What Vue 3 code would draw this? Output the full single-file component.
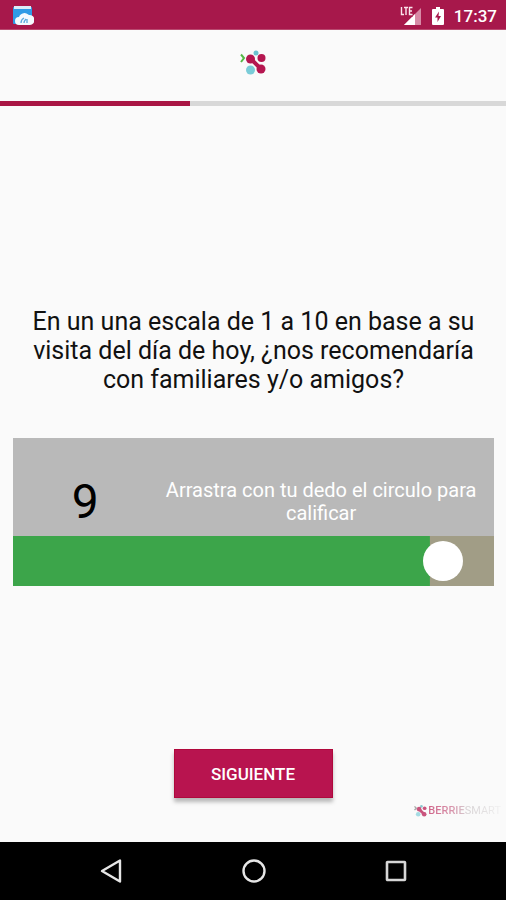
<script setup>
import { computed, ref } from 'vue'

const rating = ref(9.3)
const score = computed(() => Math.floor(rating.value))
const fillStyle = computed(() => ({ '--score': score.value / 10 }))
const progress = 37.6
</script>

<template>
  <div class="screen">
    <header class="status">
      <svg class="app-icon" width="22" height="20" viewBox="0 0 22 20" aria-hidden="true">
        <rect x="1" y="1" width="19" height="17" rx="1" fill="#2f9be6" />
        <rect x="2" y="0" width="17" height="3" fill="#dcecf8" />
        <path d="M7 19a4 4 0 0 1 0-8 6 6 0 0 1 10-2 4.800 4.800 0 0 1 1 10z" fill="#f4fafe" />
        <path d="M9 17c0-3 1-4 3-5M12 17c0-2 1-3 2-4M15 17v-4" stroke="#5aa9de" stroke-width="1.300" fill="none" />
      </svg>
      <div class="status-right">
        <svg width="22" height="20" viewBox="0 0 22 20" aria-label="LTE">
          <path d="M21 2v17H4z" fill="#d78aa6" />
          <path d="M15 8v11H4z" fill="#fff" />
          <path d="M1 1v8h3M4 1.500h4M6 1.500V9M13 1.500H9V9h4M9 5h3" stroke="#a7184b" stroke-width="3" fill="none" />
          <path d="M1.500 1v7.500h2.500M4 1.500h4M6 1.500V9M12.500 1.500H9.500v7h3M9.500 5H12" stroke="#fbe4ec" stroke-width="1.400" fill="none" />
        </svg>
        <svg class="battery" width="12" height="18" viewBox="0 0 12 18" aria-hidden="true">
          <path d="M4 0h4v2h3q1 0 1 1v14q0 1-1 1H1q-1 0-1-1V3q0-1 1-1h3z" fill="#fff" />
          <path d="M7 4.500 3 10.500h2.500v4.500L9 9H6.500z" fill="#a7184b" />
        </svg>
        <time class="clock">17:37</time>
      </div>
    </header>

    <div class="brand">
      <svg width="26" height="26" viewBox="1 0 26 26" role="img" aria-label="Berrie">
        <path d="M2 4.500l3 3.500-3 4" stroke="#55b847" stroke-width="2" fill="none" />
        <circle cx="17" cy="3" r="2.500" fill="#6bc3d0" />
        <circle cx="11.500" cy="20" r="4.500" fill="#7accd8" />
        <path d="M12 9l10 10" stroke="#b51650" stroke-width="4" />
        <circle cx="11.500" cy="9" r="4.500" fill="#b51650" />
        <circle cx="22.500" cy="8" r="4" fill="#b51650" />
        <circle cx="22" cy="19" r="4.500" fill="#b51650" />
      </svg>
    </div>
    <div class="progress" role="progressbar" :aria-valuenow="progress" aria-valuemin="0" aria-valuemax="100">
      <div class="progress-fill" :style="{ width: progress + '%' }"></div>
    </div>

    <main class="content">
      <label class="question" for="rating">En un una escala de 1 a 10 en base a su visita del día de hoy, ¿nos recomendaría con familiares y/o amigos?</label>
      <section class="card">
        <div class="card-top">
          <output class="score" for="rating">{{ score }}</output>
          <p class="hint">Arrastra con tu dedo el circulo para calificar</p>
        </div>
        <input id="rating" v-model.number="rating" class="slider" :style="fillStyle" type="range" min="0" max="10" step="0.01" />
      </section>
    </main>

    <footer class="footer">
      <button class="next" type="button">SIGUIENTE</button>
      <div class="watermark">
        <svg width="13" height="12" viewBox="0 0 28 26" aria-hidden="true">
          <path d="M1 3l4 4-4 4" stroke="#a8a8a8" stroke-width="3" fill="none" />
          <circle cx="16" cy="3" r="3" fill="#8fc8d0" />
          <circle cx="9" cy="20" r="5" fill="#a5dbe3" />
          <path d="M11 9l11 11" stroke="#c9547d" stroke-width="6" />
          <circle cx="11" cy="9" r="5" fill="#c9547d" />
          <circle cx="23" cy="7" r="4" fill="#c9547d" />
          <circle cx="22" cy="20" r="5" fill="#c9547d" />
        </svg>
        <span class="wordmark"><b>BERRIE</b>SMART</span>
      </div>
    </footer>

    <nav class="nav">
      <button type="button" aria-label="Atrás">
        <svg width="24" height="26" viewBox="0 0 24 26"><path d="M20 2.500v21L2 13z" fill="none" stroke="#e6e6e6" stroke-width="2.400" stroke-linejoin="round" /></svg>
      </button>
      <button type="button" aria-label="Inicio">
        <svg width="26" height="26" viewBox="0 0 26 26"><circle cx="13" cy="13" r="10.500" fill="none" stroke="#e6e6e6" stroke-width="2.400" /></svg>
      </button>
      <button type="button" aria-label="Recientes">
        <svg width="24" height="26" viewBox="0 0 24 26"><rect x="3" y="4" width="18" height="18" rx="0.500" fill="none" stroke="#d6d6d6" stroke-width="2.600" /></svg>
      </button>
    </nav>
  </div>
</template>

<style>
body {
  margin: 0;
  background: #fafafa;
}
</style>

<style scoped>
.screen {
  display: flex;
  flex-direction: column;
  min-height: 100vh;
  background: #fafafa;
  color: #111;
  font-family: Roboto, "Liberation Sans", sans-serif;
}
.status {
  display: flex;
  align-items: center;
  justify-content: space-between;
  box-sizing: border-box;
  height: 30px;
  padding: 2px 9px 0 12px;
  background: #a7184b;
  border-bottom: 1px solid #b94a70;
}
.status-right {
  display: flex;
  align-items: center;
}
.battery {
  margin: 0 10px;
}
.clock {
  color: #fff;
  font-size: 17px;
  font-weight: 500;
  line-height: 24px;
}
.brand {
  display: flex;
  justify-content: center;
  padding: 20px 0 25px;
}
.brand svg {
  display: block;
}
.progress {
  height: 5px;
  background: #d8d8d8;
}
.progress-fill {
  height: 100%;
  background: #a91644;
}
.content {
  display: flex;
  flex: 1;
  flex-direction: column;
  justify-content: center;
  padding: 38px 12px 0 13px;
}
.question {
  padding: 0 16px;
  font-size: 25px;
  line-height: 29px;
  text-align: center;
}
.card {
  margin-top: 44px;
  background: #b9b9b9;
}
.card-top {
  display: grid;
  grid-template-columns: 3fr 7fr;
  align-items: center;
  box-sizing: border-box;
  height: 98px;
  padding-top: 29px;
}
.score {
  color: #000;
  font-size: 48px;
  line-height: 56px;
  text-align: center;
}
.hint {
  margin: 0;
  padding-right: 9px;
  color: #fff;
  font-size: 20px;
  line-height: 23px;
  text-align: center;
}
.slider {
  display: block;
  width: 100%;
  height: 50px;
  margin: 0;
  appearance: none;
  background: linear-gradient(#3ca54a, #3ca54a) no-repeat 0 0 / calc(20px + (100% - 40px) * var(--score)) 100%, #a19d86;
}
.slider::-webkit-slider-thumb {
  width: 40px;
  height: 40px;
  appearance: none;
  background: #fff;
  border-radius: 50%;
}
.footer {
  display: flex;
  flex-direction: column;
  align-items: center;
  padding-bottom: 18px;
}
.next {
  width: 159px;
  height: 49px;
  padding: 0;
  border: 1px solid #b0083c;
  background: #b8144f;
  box-shadow: 0 4px 4px #0004;
  color: #fff;
  font: 500 17px/24px Roboto, "Liberation Sans", sans-serif;
}
.watermark {
  display: flex;
  align-self: flex-end;
  align-items: center;
  gap: 1px;
  height: 26px;
  padding-right: 5px;
}
.wordmark {
  background: linear-gradient(90deg, #cf6288 0%, #d898ae 35%, #d5d0d2 54%, #f1f1f1 100%);
  background-clip: text;
  color: transparent;
  font-size: 11px;
  line-height: 16px;
}
.wordmark b {
  font-weight: 500;
}
.nav {
  display: flex;
  align-items: center;
  justify-content: space-around;
  height: 58px;
  padding: 0 39px 0 41px;
  background: #000;
}
.nav button {
  display: flex;
  padding: 0;
  border: 0;
  background: none;
}
</style>
